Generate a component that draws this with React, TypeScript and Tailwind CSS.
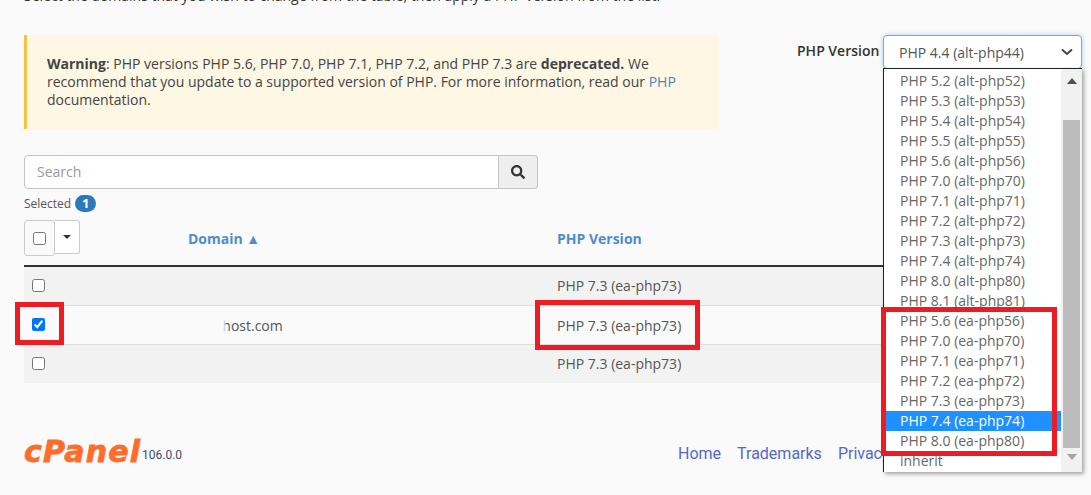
import React from 'react';
import { FaSearch } from 'react-icons/fa';

const versions = [
  'PHP 5.2 (alt-php52)', 'PHP 5.3 (alt-php53)', 'PHP 5.4 (alt-php54)', 'PHP 5.5 (alt-php55)',
  'PHP 5.6 (alt-php56)', 'PHP 7.0 (alt-php70)', 'PHP 7.1 (alt-php71)', 'PHP 7.2 (alt-php72)',
  'PHP 7.3 (alt-php73)', 'PHP 7.4 (alt-php74)', 'PHP 8.0 (alt-php80)', 'PHP 8.1 (alt-php81)',
  'PHP 5.6 (ea-php56)', 'PHP 7.0 (ea-php70)', 'PHP 7.1 (ea-php71)', 'PHP 7.2 (ea-php72)',
  'PHP 7.3 (ea-php73)', 'PHP 7.4 (ea-php74)', 'PHP 8.0 (ea-php80)', 'inherit',
];

const rows = [
  { domain: '', checked: false, striped: true },
  { domain: 'xxxxhost.com', checked: true, striped: false },
  { domain: '', checked: false, striped: true },
];

const App: React.FC = () => {
  return (
    <div className="relative h-[495px] w-[1091px] overflow-hidden bg-[#fafafa] font-['Open_Sans',sans-serif] text-[14px] text-[#555]">
      {/* Intro line, cut off by the top of the window */}
      <p className="mt-[-13px] h-[18px] pl-[24px] leading-[18px] text-[#333]">
        Select the domains that you wish to change from the table, then apply a PHP version from the list.
      </p>

      <div className="mt-[30px] flex items-start pl-[24px]">
        {/* Warning */}
        <div className="h-[94px] w-[695px] border-l-[3px] border-[#f5c242] bg-[#fdf7e3] pl-[20px] pr-[30px] pt-[20px] leading-[18px] text-[#444]">
          <strong className="font-bold">Warning</strong>: PHP versions PHP 5.6, PHP 7.0, PHP 7.1, PHP 7.2, and PHP 7.3 are{' '}
          <strong className="font-bold">deprecated.</strong> We recommend that you update to a supported version of PHP. For more information, read our{' '}
          <span className="text-[#4b87bd]">PHP</span> documentation.
        </div>

        {/* PHP version select */}
        <div className="ml-[78px] flex items-start">
          <span className="mr-[3px] mt-[6px] w-[83px] whitespace-nowrap text-[14px] font-semibold leading-[20px] text-[#333]">PHP Version</span>
          <div className="relative z-10 w-[199px]">
            <div className="flex h-[34px] items-center justify-between rounded-[4px] border border-[#66afe9] bg-white pl-[15px] pr-[8px] shadow-[0_0_4px_rgba(102,175,233,0.6)]">
              <span className="text-[14px]">PHP 4.4 (alt-php44)</span>
              <svg width="12" height="8" viewBox="0 0 12 8" fill="none" stroke="#444" strokeWidth="2">
                <path d="M1 1.5 L6 6 L11 1.5" />
              </svg>
            </div>
            {/* Opened option list */}
            <div className="absolute left-0 top-[33px] flex h-[404px] w-[199px] border border-r-0 border-b-0 border-[#222] bg-white shadow-[2px_2px_4px_rgba(0,0,0,0.35)]">
              <ul className="w-[177px] pt-[2px]">
                {versions.map((v, i) => (
                  <li
                    key={i}
                    className={
                      v === 'PHP 7.4 (ea-php74)'
                        ? 'h-[20px] bg-[#1e90ff] pl-[16px] leading-[20px] text-white'
                        : 'h-[20px] pl-[16px] leading-[20px] text-[#666]'
                    }
                  >
                    {v}
                  </li>
                ))}
              </ul>
              <div className="flex w-[21px] flex-col items-center bg-[#f1f1f1] px-[2px]">
                <svg className="mt-[9px]" width="10" height="6" viewBox="0 0 10 6"><path d="M5 0 L10 6 L0 6 Z" fill="#505050" /></svg>
                <div className="mt-[36px] h-[328px] w-full bg-[#bcbcbc]" />
                <svg className="mt-[6px]" width="10" height="6" viewBox="0 0 10 6"><path d="M0 0 L10 0 L5 6 Z" fill="#a3a3a3" /></svg>
              </div>
            </div>
          </div>
        </div>
      </div>

      {/* Search */}
      <div className="ml-[24px] mt-[26px] flex h-[34px] w-[514px]">
        <div className="flex flex-1 items-center rounded-l-[4px] border border-[#c4c4c4] bg-white pb-[2px] pl-[12px] text-[#999]">Search</div>
        <div className="flex w-[39px] items-center justify-center rounded-r-[4px] border border-l-0 border-[#c4c4c4] bg-[#eee] text-[#333]">
          <FaSearch className="h-[14px] w-[14px]" />
        </div>
      </div>

      <div className="ml-[24px] mt-[6px] flex h-[17px] items-center text-[12px] text-[#555]">
        Selected
        <span className="ml-[4px] flex h-[17px] w-[21px] items-center justify-center rounded-full bg-[#2a7ab8] text-[13px] font-bold text-white">1</span>
      </div>

      {/* Table */}
      <div className="ml-[24px] mt-[8px] w-[1043px]">
        <div className="flex h-[45px] items-start">
          <div className="flex w-[164px] items-start">
            <div className="flex h-[36px] w-[31px] items-center justify-center rounded-[3px] border border-[#ccc] bg-[#fafafa]">
              <input type="checkbox" readOnly className="h-[13px] w-[13px]" />
            </div>
            <div className="flex h-[34px] w-[25px] items-center justify-center rounded-r-[3px] border border-l-0 border-[#ccc] bg-white">
              <svg width="8" height="4" viewBox="0 0 8 4"><path d="M0 0 L8 0 L4 4 Z" fill="#333" /></svg>
            </div>
          </div>
          <div className="mt-[9px] w-[369px] text-[14px] font-bold leading-[20px] text-[#4f8cc9]">Domain ▲</div>
          <div className="mt-[9px] text-[14px] font-bold leading-[20px] text-[#4f8cc9]">PHP Version</div>
        </div>
        <div className="h-[2px] bg-[#333]" />
        {rows.map((row, i) => (
          <div
            key={i}
            className={
              row.striped
                ? 'flex h-[38px] items-center bg-[#f2f2f2] text-[#555]'
                : 'flex h-[40px] items-center border-y border-[#ddd] text-[#555]'
            }
          >
            <div className="flex w-[164px] pb-[2px] pl-[8px]">
              <input type="checkbox" readOnly checked={row.checked} className="h-[13px] w-[13px]" />
            </div>
            <div className="relative w-[369px]">
              {row.domain && <span className="ml-[5px]">{row.domain}</span>}
              {row.domain && <span className="absolute left-[-4px] top-[-2px] h-[22px] w-[41px] rounded-[6px] bg-[#fafafa] blur-[1px]" />}
            </div>
            <div className={row.striped ? 'pb-[2px]' : ''}>PHP 7.3 (ea-php73)</div>
          </div>
        ))}
      </div>

      {/* Footer */}
      <div className="ml-[24px] mt-[51px] flex h-[40px] items-center">
        <span className="mt-[-4px] w-[116px] font-['DejaVu_Sans',sans-serif] text-[30px] font-bold italic leading-[40px] tracking-[1.2px] text-[#ff6c2c] [-webkit-text-stroke:0.8px_#ff6c2c]">cPanel</span>
        <span className="ml-[2px] mt-[2px] w-[536px] font-['Roboto',sans-serif] text-[12px] text-[#3d4a66]">106.0.0</span>
        <span className="font-['Roboto',sans-serif] text-[16px] text-[#5468c8]">Home</span>
        <span className="ml-[16px] font-['Roboto',sans-serif] text-[16px] text-[#5468c8]">Trademarks</span>
        <span className="ml-[16px] font-['Roboto',sans-serif] text-[16px] text-[#5468c8]">Privacy Policy</span>
      </div>

      {/* Red annotation boxes drawn over the screenshot */}
      <div className="absolute left-[15px] top-[302px] z-20 h-[43px] w-[49px] border-[5px] border-[#ed1c24]" />
      <div className="absolute left-[535px] top-[300px] z-20 h-[50px] w-[165px] border-[5px] border-[#ed1c24]" />
      <div className="absolute left-[881px] top-[307px] z-20 h-[149px] w-[176px] border-[5px] border-[#ed1c24]" />
    </div>
  );
};

export default App;
